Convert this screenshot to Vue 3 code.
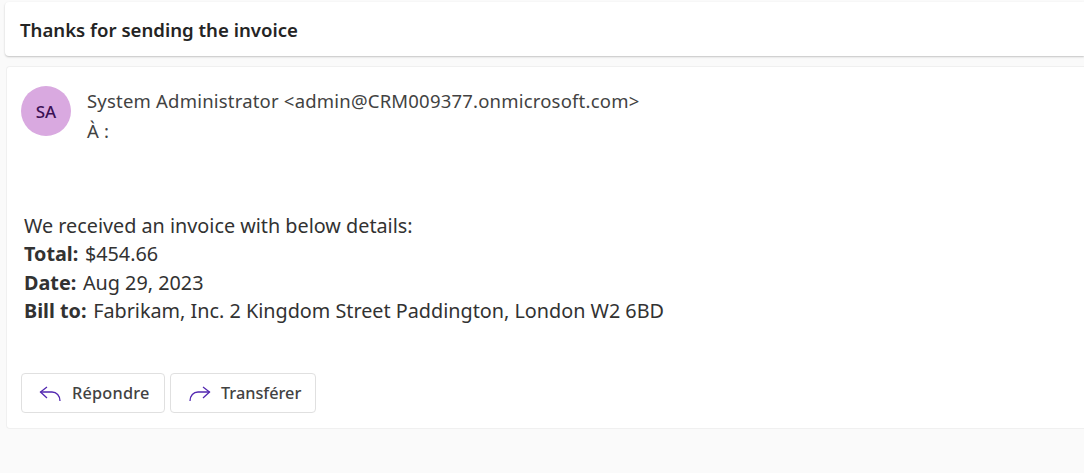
<template>
  <div class="page">
    <div class="subject-card">
      <span class="subject">Thanks for sending the invoice</span>
    </div>
    <div class="mail-card">
      <div class="mail-head">
        <div class="avatar">SA</div>
        <div class="people">
          <div>System Administrator &lt;admin@CRM009377.onmicrosoft.com&gt;</div>
          <div>À :</div>
        </div>
      </div>
      <div class="mail-body">
        <div>We received an invoice with below details:</div>
        <div v-for="row in rows" :key="row.label">
          <b>{{ row.label }}</b> {{ row.value }}
        </div>
      </div>
      <div class="actions">
        <button class="action reply">
          <svg width="24" height="24" viewBox="0 0 24 24" fill="none" stroke="#5227b0" stroke-width="1.3">
            <path d="M9 6 L2.5 11 L9 17" />
            <path d="M2.5 11 H14 C18.5 11 22 14.5 22 20" />
          </svg>
          <span>Répondre</span>
        </button>
        <button class="action forward">
          <svg width="24" height="24" viewBox="0 0 24 24" fill="none" stroke="#5227b0" stroke-width="1.3">
            <path d="M16 6 L22.5 11 L16 17" />
            <path d="M22.5 11 H11 C6.5 11 3 14.5 3 20" />
          </svg>
          <span>Transférer</span>
        </button>
      </div>
    </div>
  </div>
</template>

<script setup>
const rows = [
  { label: "Total:", value: "$454.66" },
  { label: "Date:", value: "Aug 29, 2023" },
  { label: "Bill to:", value: "Fabrikam, Inc. 2 Kingdom Street Paddington, London W2 6BD" },
];
</script>

<style>
html,
body {
  margin: 0;
  background: #fafafa;
  overflow: hidden;
}
</style>

<style scoped>
.page {
  height: 473px;
  box-sizing: border-box;
  padding: 2px 0 0 5px;
  background: #fafafa;
  font-family: "Noto Sans", "Open Sans", sans-serif;
  color: #424242;
  display: flex;
  flex-direction: column;
  gap: 10px;
}
.subject-card {
  height: 54px;
  box-sizing: border-box;
  padding: 0 15px;
  display: flex;
  align-items: center;
  background: #fff;
  border-radius: 4px 0 0 4px;
  box-shadow: 0 1px 2px rgba(0, 0, 0, 0.22);
}
.subject {
  font-size: 18.6px;
  font-weight: 600;
  color: #242424;
}
.mail-card {
  height: 363px;
  box-sizing: border-box;
  margin-left: 1px;
  padding: 19px 0 0 14px;
  background: #fff;
  border: 1px solid #f0f0f0;
  border-right: 0;
  border-radius: 4px 0 0 4px;
}
.mail-head {
  display: flex;
  gap: 16px;
}
.avatar {
  width: 50px;
  height: 50px;
  border-radius: 50%;
  background: #d9a9e0;
  color: #3b1054;
  display: flex;
  align-items: center;
  justify-content: center;
  font-size: 17px;
  font-weight: 500;
}
.people {
  font-size: 18.5px;
  letter-spacing: 0.2px;
  line-height: 29.5px;
}
.mail-body {
  margin: 67px 0 0 3px;
  font-size: 19.8px;
  line-height: 28.3px;
  color: #323232;
}
.mail-body b {
  font-weight: 700;
  margin-right: 1.5px;
}
.actions {
  display: flex;
  gap: 5px;
  margin-top: 48px;
}
.action {
  height: 40px;
  box-sizing: border-box;
  padding: 0 0 0 16px;
  display: flex;
  align-items: center;
  gap: 10px;
  background: #fff;
  border: 1px solid #e0e0e0;
  border-radius: 4px;
  font-family: inherit;
  font-size: 16.3px;
  font-weight: 500;
  color: #424242;
}
.reply {
  width: 144px;
  letter-spacing: 0.2px;
}
.forward {
  width: 146px;
}
</style>
